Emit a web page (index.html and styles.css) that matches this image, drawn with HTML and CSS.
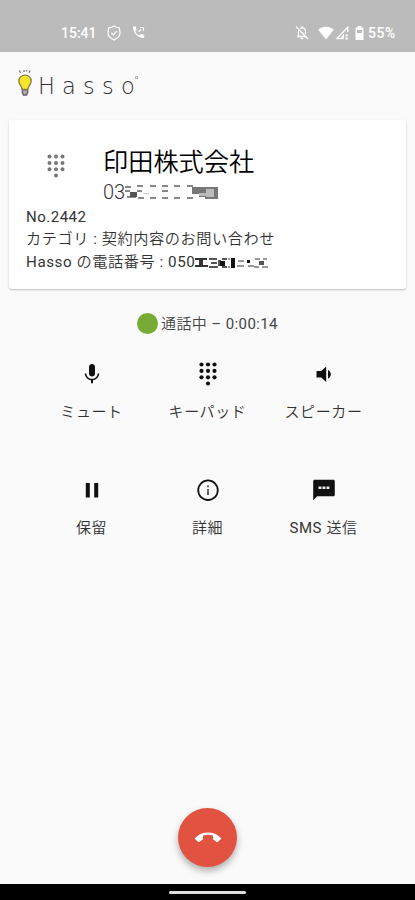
FILE: index.html
```
<!DOCTYPE html>
<html lang="ja">
<head>
    <meta charset="UTF-8">
    <meta name="viewport" content="width=device-width, initial-scale=1.0">
    <title>Hasso</title>
    <link rel="stylesheet" href="styles.css">
</head>
<body>
    <div class="statusbar">
        <div class="status-left">
            <span class="time">15:41</span>
            <svg class="icon-shield" width="14" height="16" viewBox="0 0 14 16" fill="none" stroke="#fff" stroke-width="1.2">
                <path d="M7 1l2.4 1.3 3 .6.4 3.1L13 8l-.4 2.4-2.2 2.4L7 15l-3.400-2.200L1.400 10.400 1 8l.2-2 .4-3.100 3-.6z"/>
                <path d="M4.300 8l2 2 3.600-3.900"/>
            </svg>
            <svg width="13" height="13" viewBox="0 0 13 13" fill="#fff">
                <path d="M1 .5h2.800l.8 3.400-1.300 1.500c.9 1.700 2.100 3 4 4l1.500-1.300 3.400.8v3.100C6.500 12.500.6 7 1 .5z"/>
                <path d="M6.500 5.800L9 3.400M11.500 5V2M11.500 1.500H8" fill="none" stroke="#fff" stroke-width="1.200"/>
            </svg>
        </div>
        <div class="status-right">
            <svg class="icon-bell" width="14" height="15" viewBox="0 0 14 15" fill="none" stroke="#fff" stroke-width="1.300">
                <path d="M1 1.500l12 12.500M3.500 11.500V6.200c0-.8.2-1.400.6-1.900M5.300 3.300C8 2 10.500 3.500 10.500 6.200v2.600M2 11.500h8M7 1v2"/>
                <path d="M5.700 13.500h2.600"/>
            </svg>
            <svg width="16" height="14" viewBox="0 0 16 14" fill="#fff">
                <path d="M8 13.500L.2 3.700C4.500-.2 11.500-.2 15.800 3.700z"/>
            </svg>
            <svg class="icon-signal" width="14" height="14" viewBox="0 0 14 14">
                <path d="M1.500 12.700L12.800 1.300V6M1.500 12.700h7" fill="none" stroke="#fff" stroke-width="1.300"/>
                <path d="M5 12.500l4-5v5zM10.500 8.500h2.200v2h-2.200zM10.500 11.400h2.200v2h-2.200z" fill="#fff"/>
            </svg>
            <svg class="icon-battery" width="9" height="14" viewBox="0 0 9 14">
                <path d="M2.700 0h3.600v1.500H8.500V14h-8V1.500h2.200z" fill="#fff"/>
                <path d="M2 4h5v3H2z" fill="#bbb"/>
            </svg>
            <span class="percent">55%</span>
        </div>
    </div>

    <header class="header">
        <svg width="16" height="28" viewBox="0 0 16 28">
            <path d="M2.500 1.500l1 2.200M7 1v2M13 1.500l-1 2.200M9.500 1v1.500" stroke="#666" stroke-width="1.200" fill="none"/>
            <path d="M5.300 20.500h5.400v3L9.500 26h-3l-1.200-2.500z" fill="#b5a9b0" stroke="#665a66" stroke-width="1.300"/>
            <path d="M8 6.200c-3.600 0-6.200 2.500-6.200 5.800 0 2.500 1.600 4 2.500 5.800.5 1 .6 2 1 2.700h5.400c.4-.7.5-1.700 1-2.700.9-1.800 2.500-3.300 2.500-5.800 0-3.300-2.600-5.800-6.200-5.800z" fill="#f8e52c" stroke="#81784c" stroke-width="1.300"/>
        </svg>
        <span class="brand">Hasso</span>
        <span class="mark"></span>
    </header>

    <main class="main">
        <section class="card">
            <div class="caller">
                <svg class="caller-icon" width="18" height="24" viewBox="0 0 18 24" fill="#777">
                    <circle cx="2.500" cy="2.500" r="2"/><circle cx="9" cy="2.500" r="2"/><circle cx="15.500" cy="2.500" r="2"/>
                    <circle cx="2.500" cy="8.900" r="2"/><circle cx="9" cy="8.900" r="2"/><circle cx="15.500" cy="8.900" r="2"/>
                    <circle cx="2.500" cy="15.300" r="2"/><circle cx="9" cy="15.300" r="2"/><circle cx="15.500" cy="15.300" r="2"/>
                    <circle cx="9" cy="21.500" r="2"/>
                </svg>
                <div>
                    <h1 class="name">印田株式会社</h1>
                    <div class="number">
                        <span>03</span>
                        <!-- masked digits -->
                        <svg width="94" height="18" viewBox="0 0 94 18">
                            <path d="M0 3h6v2H0zM0 7h5v2H0zM2 13h9v2H2zM12 2h6v2h-6zM12 7h5v2h-5zM13 14h6v2h-6zM25 2h6v2h-6zM25 14h6v2h-6zM37 2h6v2h-6zM37 7h6v2h-6zM37 14h6v2h-6zM49 2h6v2h-6zM49 14h6v2h-6zM62 2h6v2h-6zM62 14h6v2h-6z" fill="#888"/>
                            <path d="M5 9h7v5H5z" fill="#555"/>
                            <path d="M18 10h6v1h-6z" fill="#ccc"/>
                            <path d="M67 4h26v12H80v-2h-6v-3h-7z" fill="#777"/>
                            <path d="M74 10h7V6h8v8h-8v-1h-7z" fill="#bbb"/>
                        </svg>
                    </div>
                </div>
            </div>
            <p class="detail number-label">No.2442</p>
            <p class="detail">カテゴリ : 契約内容のお問い合わせ</p>
            <p class="detail">
                <span>Hasso の電話番号 : 050</span>
                <svg width="74" height="12" viewBox="0 0 74 12">
                    <path d="M0 1h12v2H8v5h5v2H0V8h4V3H0z" fill="#333"/>
                    <path d="M14 1h8v2h-8zM16 5h6v2h-6zM14 9h9v2h-9zM23 3h3v6h-3zM27 1h5v2h-5zM27 9h5v2h-5z" fill="#555"/>
                    <path d="M25 4h5v5h-5zM36 1h4v10h-4zM52 3h3v3h-3z" fill="#111"/>
                    <path d="M33 1h2v2h-2zM33 9h2v2h-2zM43 3h6v2h-6zM42 8h7v2h-7zM53 8h6v2h-6zM60 1h5v2h-5zM68 1h4v2h-4zM59 9h5v2h-5zM67 9h6v2h-6z" fill="#999"/>
                    <path d="M64 4h5v4h-5z" fill="#555"/>
                </svg>
            </p>
        </section>

        <div class="call-state">
            <span class="dot"></span>
            <span>通話中 – 0:00:14</span>
        </div>

        <div class="controls">
            <div class="control">
                <svg width="24" height="24" viewBox="0 0 24 24" fill="#111">
                    <path d="M12 14.500c1.700 0 3-1.300 3-3V5c0-1.700-1.300-3-3-3S9 3.300 9 5v6.500c0 1.700 1.300 3 3 3z"/>
                    <path d="M17.600 11.500c0 3.100-2.600 5.300-5.600 5.300s-5.600-2.200-5.600-5.300H4.800c0 3.500 2.800 6.300 6.200 6.800v3h2v-3c3.400-.5 6.200-3.300 6.200-6.800z"/>
                </svg>
                <span>ミュート</span>
            </div>
            <div class="control">
                <svg width="18" height="24" viewBox="0 0 18 24" fill="#111">
                    <circle cx="2.500" cy="2.500" r="2.100"/><circle cx="9" cy="2.500" r="2.100"/><circle cx="15.500" cy="2.500" r="2.100"/>
                    <circle cx="2.500" cy="8.900" r="2.100"/><circle cx="9" cy="8.900" r="2.100"/><circle cx="15.500" cy="8.900" r="2.100"/>
                    <circle cx="2.500" cy="15.300" r="2.100"/><circle cx="9" cy="15.300" r="2.100"/><circle cx="15.500" cy="15.300" r="2.100"/>
                    <circle cx="9" cy="21.500" r="2.100"/>
                </svg>
                <span>キーパッド</span>
            </div>
            <div class="control">
                <svg width="24" height="24" viewBox="0 0 24 24" fill="#111">
                    <path d="M4.500 9v6.500h4.700l5 4.500V4.500l-5 4.500z"/>
                    <path d="M16 8v8.500c1.800-.8 2.800-2.400 2.800-4.250S17.800 8.800 16 8z"/>
                </svg>
                <span>スピーカー</span>
            </div>
            <div class="control">
                <svg width="24" height="24" viewBox="0 0 24 24" fill="#111">
                    <path d="M5.800 5h4v14.500h-4zM14.200 5h4v14.500h-4z"/>
                </svg>
                <span>保留</span>
            </div>
            <div class="control">
                <svg width="24" height="24" viewBox="0 0 24 24">
                    <circle cx="12" cy="12.200" r="9.800" fill="none" stroke="#111" stroke-width="1.800"/>
                    <path d="M11 7.300h2v2h-2zM11 11h2v6h-2z" fill="#666"/>
                </svg>
                <span>詳細</span>
            </div>
            <div class="control">
                <svg width="24" height="24" viewBox="0 0 24 24">
                    <path d="M2.700 1.700h18.600c.8 0 1.500.7 1.500 1.500v13.600c0 .8-.7 1.500-1.500 1.500H5.200l-4 4V3.200c0-.8.7-1.500 1.500-1.500z" fill="#111"/>
                    <path d="M6.500 8.500h2.900v2.600H6.500zM10.500 8.500h2.900v2.600h-2.900zM14.500 8.500h2.900v2.600h-2.900z" fill="#eee"/>
                </svg>
                <span>SMS 送信</span>
            </div>
        </div>

        <div class="hangup">
            <svg width="26" height="26" viewBox="0 0 24 24" fill="#fff">
                <path d="M12 9c-1.600 0-3.150.25-4.600.72v3.100c0 .39-.23.74-.56.9-.98.49-1.870 1.120-2.660 1.850-.18.18-.43.28-.7.28-.28 0-.53-.11-.71-.29L.29 13.080c-.18-.17-.29-.42-.29-.7 0-.28.110-.53.290-.71C3.340 8.780 7.460 7 12 7s8.660 1.780 11.710 4.670c.18.18.29.43.29.71 0 .28-.11.53-.29.710l-2.480 2.480c-.18.18-.43.29-.71.29-.27 0-.52-.11-.7-.28-.79-.74-1.690-1.360-2.670-1.850-.33-.16-.56-.5-.56-.9v-3.100C15.150 9.250 13.600 9 12 9z"/>
            </svg>
        </div>
    </main>

    <footer class="navbar"><span class="pill"></span></footer>
</body>
</html>
```
FILE: styles.css
```
* {
    margin: 0;
    padding: 0;
    box-sizing: border-box;
}

body {
    height: 900px;
    display: flex;
    flex-direction: column;
    background: #fafafa;
    color: #333;
    font-family: Roboto, 'Noto Sans CJK JP DemiLight', 'Noto Sans CJK JP', sans-serif;
    font-size: 15px;
    overflow: hidden;
}

svg {
    display: block;
    flex: none;
}

.statusbar {
    height: 52px;
    padding: 13px 19px 0 61px;
    background: #bbb;
    color: #fff;
    display: flex;
    justify-content: space-between;
    font-size: 14px;
    font-weight: 500;
}

.status-left,
.status-right {
    display: flex;
    align-items: center;
}

.time {
    width: 46px;
}

.icon-shield {
    margin-right: 11px;
}

.icon-bell {
    margin-right: 9px;
}

.icon-signal {
    margin-left: 1px;
}

.icon-battery {
    margin: 0 4px 0 6px;
}

.percent {
    letter-spacing: 0.6px;
}

.header {
    height: 68px;
    padding: 17px 0 0 17px;
    display: flex;
    align-items: flex-start;
}

.brand {
    margin: 3px 0 0 5px;
    color: #333;
    font-family: 'DejaVu Sans', sans-serif;
    font-size: 22.5px;
    font-weight: 200;
    line-height: 28px;
    letter-spacing: 7.2px;
}

.mark {
    width: 3px;
    height: 3px;
    margin: 7px 0 0 -7px;
    border: 1px solid #bbb;
}

.main {
    flex: 1;
    display: flex;
    flex-direction: column;
    align-items: center;
}

.card {
    width: 397px;
    height: 169px;
    padding: 25px 17px 0;
    background: #fff;
    border-radius: 3px;
    box-shadow: 0 1px 2px rgba(0, 0, 0, 0.25);
}

.caller {
    height: 60px;
    display: flex;
}

.caller-icon {
    margin: 9px 38px 0 21px;
}

.name {
    color: #000;
    font-size: 25.2px;
    font-weight: 350;
    line-height: 34px;
    margin-top: 1px;
}

.number {
    display: flex;
    align-items: center;
    font-size: 20px;
    font-weight: 300;
    line-height: 24px;
}

.detail {
    height: 23px;
    display: flex;
    align-items: center;
    font-size: 15.2px;
    line-height: 23px;
    letter-spacing: 0.55px;
}

.number-label {
    padding-top: 1px;
    font-size: 15px;
    letter-spacing: 0.5px;
}

.call-state {
    margin-top: 23px;
    height: 24px;
    display: flex;
    align-items: center;
    gap: 3px;
    color: #444;
    line-height: 22px;
    letter-spacing: 0.4px;
}

.dot {
    width: 21px;
    height: 21px;
    margin-top: -2px;
    border-radius: 50%;
    background: #76ab35;
}

.controls {
    margin-top: 26px;
    display: grid;
    grid-template-columns: repeat(3, 116px);
    grid-auto-rows: 116px;
}

.control {
    display: flex;
    flex-direction: column;
    align-items: center;
    gap: 14px;
    line-height: 24px;
    letter-spacing: 0.6px;
}

.hangup {
    width: 59px;
    height: 59px;
    margin: auto 0 17px;
    border-radius: 50%;
    background: #e15241;
    box-shadow: 0 4px 7px rgba(0, 0, 0, 0.3);
    display: flex;
    align-items: center;
    justify-content: center;
}

.navbar {
    height: 16px;
    background: #000;
    display: flex;
    justify-content: center;
    padding-top: 7px;
}

.pill {
    width: 77px;
    height: 3px;
    border-radius: 2px;
    background: #ddd;
}
```
